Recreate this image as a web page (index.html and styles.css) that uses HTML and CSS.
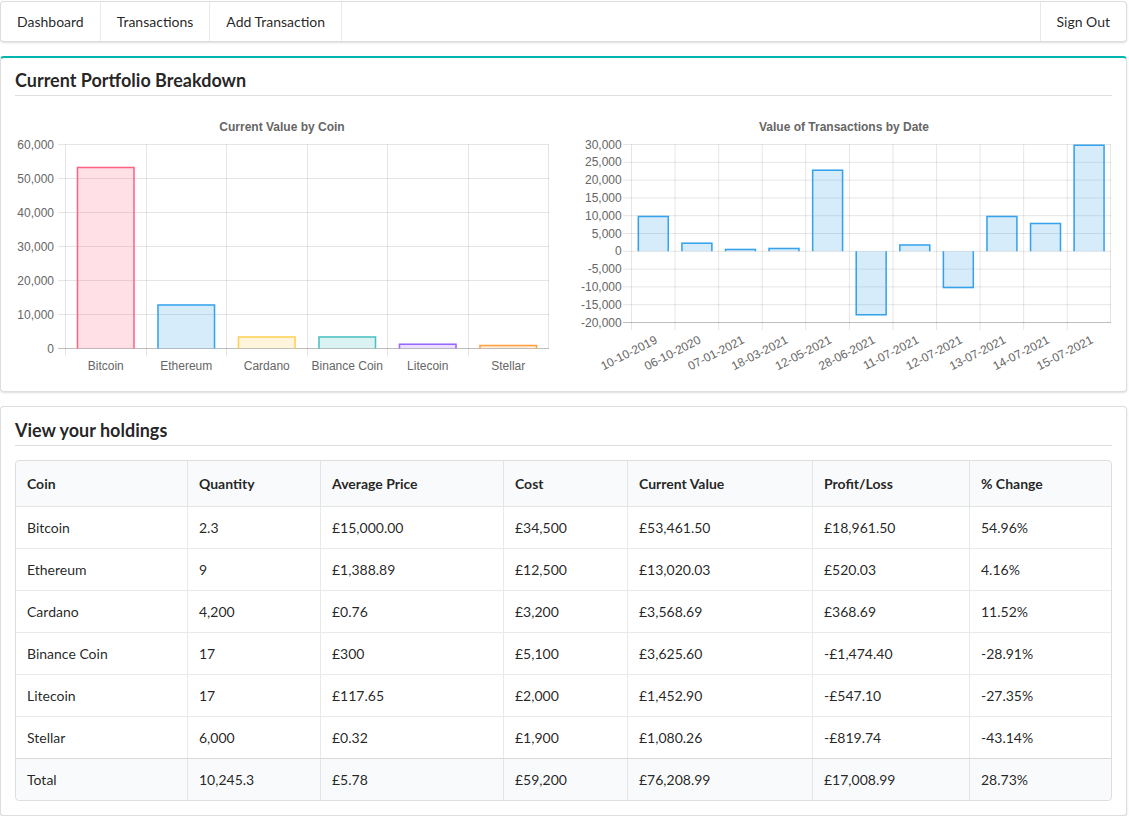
FILE: index.html
```html
<!DOCTYPE html>
<html>
<head>
<meta charset="utf-8">
<title>Portfolio</title>
<link rel="stylesheet" href="styles.css">
</head>
<body>
<div class="page">
  <nav class="menu">
    <a class="item">Dashboard</a>
    <a class="item">Transactions</a>
    <a class="item">Add Transaction</a>
    <a class="item right">Sign Out</a>
  </nav>

  <section class="segment teal">
    <h3 class="dividing-header">Current Portfolio Breakdown</h3>
    <div class="charts">
      <div class="chart">
        <svg width="534" height="267" viewBox="0 0 534 267">
          <text class="title" x="267" y="21">Current Value by Coin</text>
          <g class="grid">
            <path d="M43 34.5H534M43 68.5H534M43 102.5H534M43 136.5H534M43 170.5H534M43 204.5H534"/>
            <path d="M50.5 34.5V246.5M131.5 34.5V246.5M211.5 34.5V246.5M292.5 34.5V246.5M372.5 34.5V246.5M453.5 34.5V246.5M533.5 34.5V238.5"/>
          </g>
          <path class="axis" d="M43 238.5H534"/>
          <g class="ylabels">
            <text x="39" y="34.5">60,000</text>
            <text x="39" y="68.5">50,000</text>
            <text x="39" y="102.5">40,000</text>
            <text x="39" y="136.5">30,000</text>
            <text x="39" y="170.5">20,000</text>
            <text x="39" y="204.5">10,000</text>
            <text x="39" y="238.5">0</text>
          </g>
          <g class="bars">
            <rect class="red" x="61.75" y="56.73" width="58" height="181.77"/>
            <path class="red-s" d="M62.5 238.5V57.5H119V238.5"/>
            <rect class="blue" x="142.25" y="194.23" width="58" height="44.27"/>
            <path class="blue-s" d="M143 238.5V195H199.5V238.5"/>
            <rect class="yellow" x="222.75" y="226.37" width="58" height="12.13"/>
            <path class="yellow-s" d="M223.5 238.5V227H280V238.5"/>
            <rect class="teal" x="303.25" y="226.17" width="58" height="12.33"/>
            <path class="teal-s" d="M304 238.5V227H360.5V238.5"/>
            <rect class="purple" x="383.75" y="233.56" width="58" height="4.94"/>
            <path class="purple-s" d="M384.5 238.5V234.3H441V238.5"/>
            <rect class="orange" x="464.25" y="234.83" width="58" height="3.67"/>
            <path class="orange-s" d="M465 238.5V235.5H521.5V238.5"/>
          </g>
          <g class="xlabels">
            <text x="90.75" y="256">Bitcoin</text>
            <text x="171.25" y="256">Ethereum</text>
            <text x="251.75" y="256">Cardano</text>
            <text x="332.25" y="256">Binance Coin</text>
            <text x="412.75" y="256">Litecoin</text>
            <text x="493.25" y="256">Stellar</text>
          </g>
        </svg>
      </div>
      <div class="chart">
        <svg width="534" height="267" viewBox="0 0 534 267">
          <text class="title" x="267" y="21">Value of Transactions by Date</text>
          <g class="grid">
            <path d="M46 34.5H534M46 52.3H534M46 70.1H534M46 87.9H534M46 105.7H534M46 123.5H534M46 159.1H534M46 176.9H534M46 194.7H534"/>
            <path d="M54.5 34.5V220M98.1 34.5V220M141.7 34.5V220M185.2 34.5V220M228.8 34.5V220M272.4 34.5V220M316 34.5V220M359.6 34.5V220M403.1 34.5V220M446.7 34.5V220M490.3 34.5V220M533.5 34.5V212.5"/>
          </g>
          <path class="zero" d="M46 141.3H534"/>
          <path class="axis" d="M46 212.5H534"/>
          <g class="ylabels">
            <text x="44.7" y="34.5">30,000</text>
            <text x="44.7" y="52.3">25,000</text>
            <text x="44.7" y="70.1">20,000</text>
            <text x="44.7" y="87.9">15,000</text>
            <text x="44.7" y="105.7">10,000</text>
            <text x="44.7" y="123.5">5,000</text>
            <text x="44.7" y="141.3">0</text>
            <text x="44.7" y="159.1">-5,000</text>
            <text x="44.7" y="176.9">-10,000</text>
            <text x="44.7" y="194.7">-15,000</text>
            <text x="44.7" y="212.5">-20,000</text>
          </g>
          <g class="bars">
            <rect class="blue" x="60.6" y="105.7" width="31.4" height="35.6"/>
            <path class="blue-s" d="M61.35 141.3V106.45H91.25V141.3"/>
            <rect class="blue" x="104.2" y="132.4" width="31.4" height="8.9"/>
            <path class="blue-s" d="M104.95 141.3V133.15H134.85V141.3"/>
            <rect class="blue" x="147.75" y="138.63" width="31.4" height="2.67"/>
            <path class="blue-s" d="M148.5 141.3V139.38H178.4V141.3"/>
            <rect class="blue" x="191.33" y="137.74" width="31.4" height="3.56"/>
            <path class="blue-s" d="M192.08 141.3V138.49H221.98V141.3"/>
            <rect class="blue" x="234.91" y="59.42" width="31.4" height="81.88"/>
            <path class="blue-s" d="M235.66 141.3V60.17H265.56V141.3"/>
            <rect class="blue" x="278.49" y="141.3" width="31.4" height="64.08"/>
            <path class="blue-s" d="M279.24 141.3V204.63H309.14V141.3"/>
            <rect class="blue" x="322.07" y="134.18" width="31.4" height="7.12"/>
            <path class="blue-s" d="M322.82 141.3V134.93H352.72V141.3"/>
            <rect class="blue" x="365.65" y="141.3" width="31.4" height="37.02"/>
            <path class="blue-s" d="M366.4 141.3V177.57H396.3V141.3"/>
            <rect class="blue" x="409.23" y="105.7" width="31.4" height="35.6"/>
            <path class="blue-s" d="M409.98 141.3V106.45H439.88V141.3"/>
            <rect class="blue" x="452.81" y="112.82" width="31.4" height="28.48"/>
            <path class="blue-s" d="M453.56 141.3V113.57H483.46V141.3"/>
            <rect class="blue" x="496.39" y="34.5" width="31.4" height="106.8"/>
            <path class="blue-s" d="M497.14 141.3V35.25H527.04V141.3"/>
          </g>
          <g class="rlabels">
            <text transform="translate(79.3 229) rotate(-27)">10-10-2019</text>
            <text transform="translate(122.9 229) rotate(-27)">06-10-2020</text>
            <text transform="translate(166.5 229) rotate(-27)">07-01-2021</text>
            <text transform="translate(210 229) rotate(-27)">18-03-2021</text>
            <text transform="translate(253.6 229) rotate(-27)">12-05-2021</text>
            <text transform="translate(297.2 229) rotate(-27)">28-06-2021</text>
            <text transform="translate(340.8 229) rotate(-27)">11-07-2021</text>
            <text transform="translate(384.4 229) rotate(-27)">12-07-2021</text>
            <text transform="translate(427.9 229) rotate(-27)">13-07-2021</text>
            <text transform="translate(471.5 229) rotate(-27)">14-07-2021</text>
            <text transform="translate(515.1 229) rotate(-27)">15-07-2021</text>
          </g>
        </svg>
      </div>
    </div>
  </section>

  <section class="segment">
    <h3 class="dividing-header">View your holdings</h3>
    <table class="holdings">
      <colgroup>
        <col class="c1"><col class="c2"><col class="c3"><col class="c4"><col class="c5"><col class="c6"><col class="c7">
      </colgroup>
      <thead>
        <tr><th>Coin</th><th>Quantity</th><th>Average Price</th><th>Cost</th><th>Current Value</th><th>Profit/Loss</th><th>% Change</th></tr>
      </thead>
      <tbody>
        <tr><td>Bitcoin</td><td>2.3</td><td>£15,000.00</td><td>£34,500</td><td>£53,461.50</td><td>£18,961.50</td><td>54.96%</td></tr>
        <tr><td>Ethereum</td><td>9</td><td>£1,388.89</td><td>£12,500</td><td>£13,020.03</td><td>£520.03</td><td>4.16%</td></tr>
        <tr><td>Cardano</td><td>4,200</td><td>£0.76</td><td>£3,200</td><td>£3,568.69</td><td>£368.69</td><td>11.52%</td></tr>
        <tr><td>Binance Coin</td><td>17</td><td>£300</td><td>£5,100</td><td>£3,625.60</td><td>-£1,474.40</td><td>-28.91%</td></tr>
        <tr><td>Litecoin</td><td>17</td><td>£117.65</td><td>£2,000</td><td>£1,452.90</td><td>-£547.10</td><td>-27.35%</td></tr>
        <tr><td>Stellar</td><td>6,000</td><td>£0.32</td><td>£1,900</td><td>£1,080.26</td><td>-£819.74</td><td>-43.14%</td></tr>
      </tbody>
      <tfoot>
        <tr><th>Total</th><th>10,245.3</th><th>£5.78</th><th>£59,200</th><th>£76,208.99</th><th>£17,008.99</th><th>28.73%</th></tr>
      </tfoot>
    </table>
  </section>
</div>
</body>
</html>
```

FILE: styles.css
```css
* { box-sizing: border-box; }
html, body { margin: 0; padding: 0; background: #fff; }
body {
  font-family: Lato, "Open Sans", "Liberation Sans", sans-serif;
  font-size: 14px;
  line-height: 1.4285em;
  color: rgba(0,0,0,.87);
}
.page { padding: 1px 2px 0 0; }

.menu {
  display: flex;
  background: #fff;
  border: 1px solid rgba(34,36,38,.15);
  border-radius: 4px;
  box-shadow: 0 1px 2px 0 rgba(34,36,38,.15);
  height: 41px;
}
.menu .item {
  display: flex;
  align-items: center;
  padding: 0 16px;
  line-height: 1;
  color: rgba(0,0,0,.87);
  position: relative;
  border-right: 1px solid rgba(34,36,38,.1);
  cursor: pointer;
}
.menu .item.right {
  margin-left: auto;
  border-right: none;
  border-left: 1px solid rgba(34,36,38,.1);
}

.segment {
  margin-top: 14px;
  background: #fff;
  border: 1px solid rgba(34,36,38,.15);
  border-radius: 4px;
  box-shadow: 0 1px 2px 0 rgba(34,36,38,.15);
  padding: 12px 14px 14px 14px;
}
.segment.teal {
  border-top: 2px solid #00b5ad;
  padding-top: 11px;
}
.dividing-header {
  margin: 0 0 14px 0;
  font-size: 18px;
  font-weight: 700;
  line-height: 1.28571429em;
  padding-bottom: 3px;
  border-bottom: 1px solid rgba(34,36,38,.15);
  color: rgba(0,0,0,.87);
}

.charts {
  display: flex;
  gap: 28px;
}
.chart { width: 534px; height: 267px; flex: none; }
.chart svg { display: block; }
.chart text {
  font-family: "Liberation Sans", Arial, sans-serif;
  font-size: 12px;
  fill: #666;
}
.chart .title { font-weight: 700; text-anchor: middle; }
.chart .ylabels text { text-anchor: end; dominant-baseline: central; }
.chart .xlabels text { text-anchor: middle; dominant-baseline: central; }
.chart .rlabels text { text-anchor: end; dominant-baseline: central; }
.grid path { stroke: rgba(0,0,0,.1); stroke-width: 1; fill: none; }
.axis { stroke: rgba(0,0,0,.25); stroke-width: 1; fill: none; }
.zero { stroke: rgba(0,0,0,.1); stroke-width: 1; fill: none; }

.bars path { fill: none; stroke-width: 1.5; }
.red { fill: rgba(255,99,132,.2); }
.red-s { stroke: rgb(255,99,132); }
.blue { fill: rgba(54,162,235,.2); }
.blue-s { stroke: rgb(54,162,235); }
.yellow { fill: rgba(255,206,86,.2); }
.yellow-s { stroke: rgb(255,206,86); }
.teal { fill: rgba(75,192,192,.2); }
.teal-s { stroke: rgb(75,192,192); }
.purple { fill: rgba(153,102,255,.2); }
.purple-s { stroke: rgb(153,102,255); }
.orange { fill: rgba(255,159,64,.2); }
.orange-s { stroke: rgb(255,159,64); }

.holdings {
  width: 100%;
  table-layout: fixed;
  border-collapse: separate;
  border-spacing: 0;
  border: 1px solid rgba(34,36,38,.15);
  border-radius: 4px;
  font-size: 14px;
  color: rgba(0,0,0,.87);
}
.holdings col.c1 { width: 171px; }
.holdings col.c2 { width: 133px; }
.holdings col.c3 { width: 183px; }
.holdings col.c4 { width: 124px; }
.holdings col.c5 { width: 185px; }
.holdings col.c6 { width: 157px; }
.holdings th, .holdings td {
  text-align: left;
  line-height: 20px;
  border-left: 1px solid rgba(34,36,38,.1);
}
.holdings th:first-child, .holdings td:first-child { border-left: none; }
.holdings thead th {
  background: #f9fafb;
  font-weight: 700;
  padding: 12.5px 11px;
  border-bottom: 1px solid rgba(34,36,38,.1);
}
.holdings thead th:first-child { border-top-left-radius: 4px; }
.holdings thead th:last-child { border-top-right-radius: 4px; }
.holdings td {
  padding: 10.5px 11px;
  border-top: 1px solid rgba(34,36,38,.1);
}
.holdings tbody tr:first-child td { border-top: none; }
.holdings tfoot th {
  background: #f9fafb;
  font-weight: 400;
  padding: 10.5px 11px;
  border-top: 1px solid rgba(34,36,38,.15);
}
.holdings tfoot th:first-child { border-bottom-left-radius: 4px; }
.holdings tfoot th:last-child { border-bottom-right-radius: 4px; }
```
